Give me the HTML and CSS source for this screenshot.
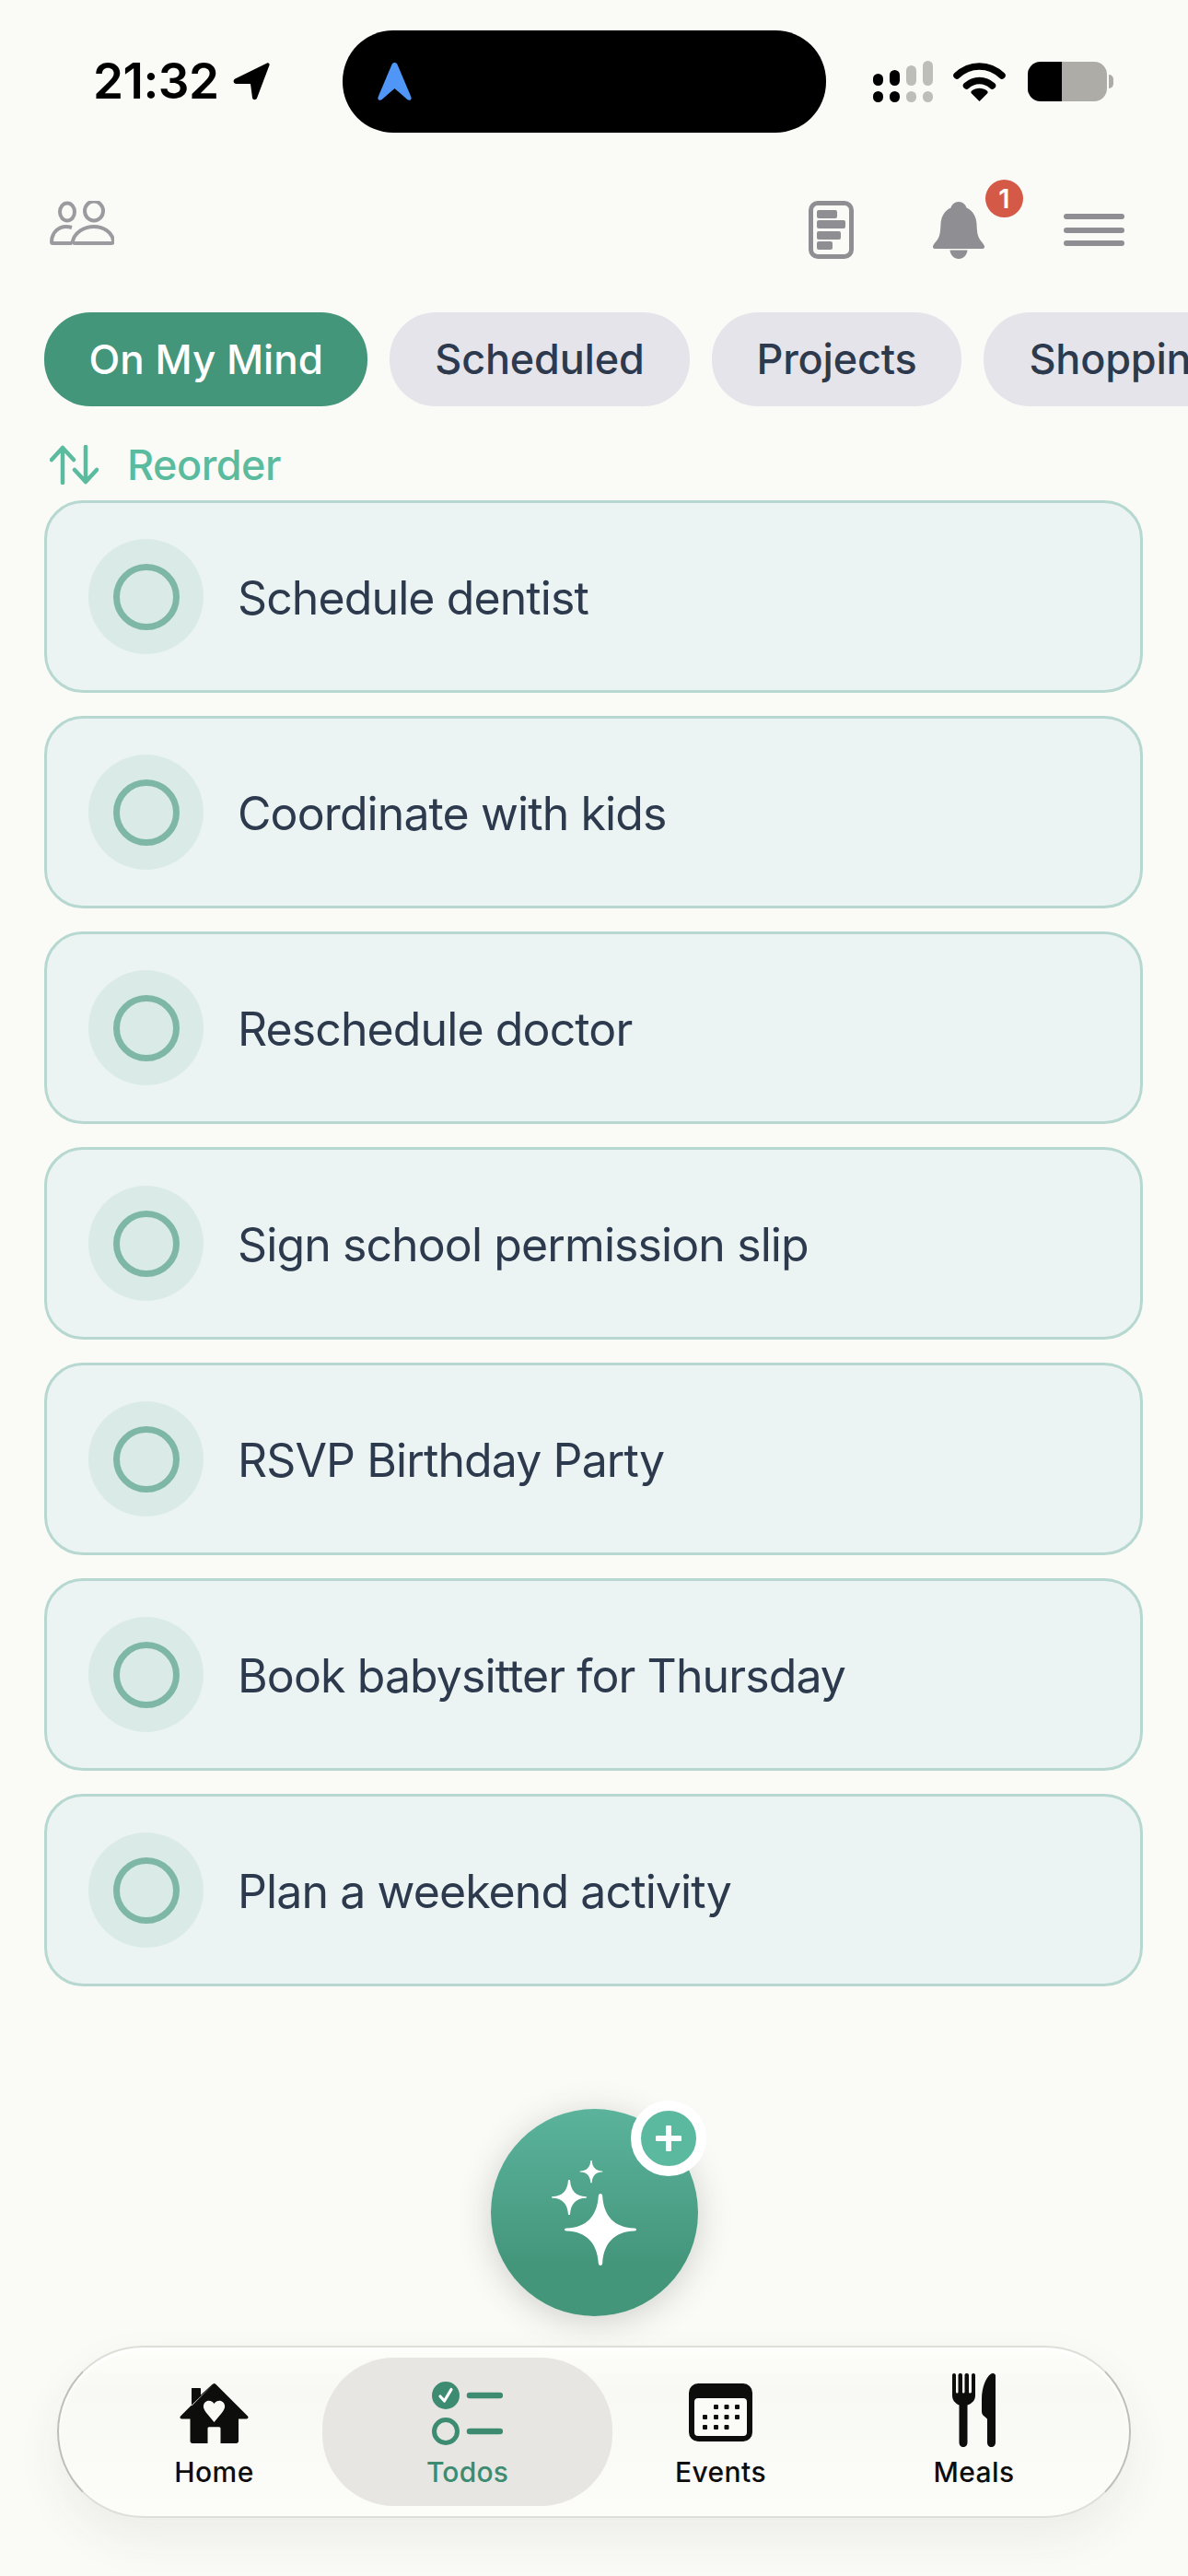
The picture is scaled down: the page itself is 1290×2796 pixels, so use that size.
FILE: index.html
```html
<!DOCTYPE html>
<html lang="en">
<head>
<meta charset="utf-8">
<title>Todos</title>
<link rel="stylesheet" href="styles.css">
</head>
<body>
<div class="page">
  <div class="status">
    <span class="time">21:32</span>
    <svg class="loc" viewBox="0 0 40 41"><path d="M37 .5c1.500-.6 3 .7 2.500 2.300L26 38.500c-.9 2.500-4.600 2.200-5-.5l-2-15H4c-3.500 0-4.600-3.700-1.700-5.500z" fill="#000"/></svg>
    <div class="island">
      <svg class="nav-arrow" viewBox="0 0 37 41"><path d="M15.500 2c1.300-2.700 4.700-2.700 6 0l14.800 35c1.300 3-1.600 5-4 3L18.500 28 4.700 40c-2.400 2-5.300 0-4-3z" fill="#4F96F7"/></svg>
    </div>
    <svg class="signal" viewBox="0 0 65 45">
      <rect x="0" y="14" width="11" height="13" rx="5.500" fill="#000"/>
      <rect x="18" y="10" width="11" height="17" rx="5.500" fill="#000"/>
      <rect x="36" y="5" width="11" height="22" rx="5.500" fill="#BDBEB9"/>
      <rect x="54" y="0" width="11" height="27" rx="5.500" fill="#BDBEB9"/>
      <rect x="0" y="33" width="11" height="12" rx="5.500" fill="#000"/>
      <rect x="18" y="33" width="11" height="12" rx="5.500" fill="#000"/>
      <rect x="36" y="33" width="11" height="12" rx="5.500" fill="#BDBEB9"/>
      <rect x="54" y="33" width="11" height="12" rx="5.500" fill="#BDBEB9"/>
    </svg>
    <svg class="wifi" viewBox="0 0 57 42">
      <path d="M4 14C18 .5 39 .5 53 14" fill="none" stroke="#000" stroke-width="7.500" stroke-linecap="round"/>
      <path d="M14.500 25c8-7.500 20-7.500 28 0" fill="none" stroke="#000" stroke-width="7.500" stroke-linecap="round"/>
      <path d="M28.500 42L20 33.500c-1-1-.8-2.200.2-3 5-3.600 11.600-3.600 16.600 0 1 .8 1.200 2 .2 3z" fill="#000"/>
    </svg>
    <div class="battery"><span class="battery-fill"></span></div>
    <span class="battery-nub"></span>
  </div>

  <header class="topbar">
    <svg class="people" viewBox="0 0 70 48" fill="none" stroke="#9B9B9F" stroke-width="4">
      <ellipse cx="19" cy="12" rx="8" ry="9.500"/>
      <ellipse cx="48" cy="11" rx="10" ry="10.500"/>
      <path d="M24 29c-2-.6-4-1-6-1C9 28 2 35 2 44.500c0 .8.500 1.500 1.500 1.500H24"/>
      <path d="M27 46c-1.300 0-2.300-1-2-2.500C27 34.500 37 28 48 28s20 6.500 21 15.500c.2 1.500-.8 2.500-2 2.500z"/>
    </svg>
    <div class="top-actions">
      <div class="doc">
        <span class="doc-line doc-line-a"></span>
        <span class="doc-line doc-line-b"></span>
        <span class="doc-line doc-line-c"></span>
        <span class="doc-line doc-line-d"></span>
      </div>
      <div class="bell-wrap">
        <svg class="bell" viewBox="0 0 56 62" fill="#8F8F93">
          <path d="M28 0c4.500 0 7.500 3 8.500 6.500C43.500 9.500 47 16 47.500 24c.5 9 .5 13.500 5 19 2.500 3 4 5 3.500 6.500-.5 1-1.500 1.500-3 1.500H3c-1.500 0-2.500-.5-3-1.500-.5-1.500 1-3.500 3.500-6.500 4.500-5.500 4.500-10 5-19C9 16 12.500 9.500 19.500 6.500 20.500 3 23.500 0 28 0z"/>
          <path d="M18.500 52.500h19C37 58 33 62 28 62s-9-4-9.500-9.500z"/>
        </svg>
        <span class="badge">1</span>
      </div>
      <div class="menu"><span></span><span></span><span></span></div>
    </div>
  </header>

  <nav class="tabs">
    <span class="tab tab-on">On My Mind</span>
    <span class="tab">Scheduled</span>
    <span class="tab">Projects</span>
    <span class="tab">Shopping</span>
  </nav>

  <div class="reorder">
    <svg class="reorder-icon" viewBox="0 0 53 43" fill="none" stroke="#5BBB9F" stroke-width="4.500" stroke-linecap="round" stroke-linejoin="round">
      <path d="M14 41V3M2 16L14 3l12 13"/>
      <path d="M39 2v38M27 27l12 13 12-13"/>
    </svg>
    <span>Reorder</span>
  </div>

  <ul class="list">
    <li class="card"><span class="check"><span class="ring"></span></span><span class="label">Schedule dentist</span></li>
    <li class="card"><span class="check"><span class="ring"></span></span><span class="label">Coordinate with kids</span></li>
    <li class="card"><span class="check"><span class="ring"></span></span><span class="label">Reschedule doctor</span></li>
    <li class="card"><span class="check"><span class="ring"></span></span><span class="label">Sign school permission slip</span></li>
    <li class="card"><span class="check"><span class="ring"></span></span><span class="label">RSVP Birthday Party</span></li>
    <li class="card"><span class="check"><span class="ring"></span></span><span class="label">Book babysitter for Thursday</span></li>
    <li class="card"><span class="check"><span class="ring"></span></span><span class="label">Plan a weekend activity</span></li>
  </ul>

  <div class="fab-row">
    <div class="fab">
      <svg class="stars" viewBox="0 0 92 114" fill="#fff">
        <defs>
          <path id="star" d="M0-39c1.400 0 2 1 2.200 2.500C3.500-15 15-2 37-1.500c1.400.1 2 .7 2 1.500s-.6 1.400-2 1.500C15 2 3.500 15 2.200 36.500c-.2 1.500-.8 2.500-2.200 2.500s-2-1-2.200-2.500C-3.500 15-15 2-37 1.500c-1.400-.1-2-.7-2-1.500s.6-1.400 2-1.500C-15-2-3.500-15-2.200-36.500c.2-1.500.8-2.500 2.200-2.500z"/>
        </defs>
        <use href="#star" transform="translate(53 75)"/>
        <use href="#star" transform="translate(19 40) scale(.49)"/>
        <use href="#star" transform="translate(43 12) scale(.32)"/>
      </svg>
      <span class="fab-plus">
        <svg viewBox="0 0 28 28" class="plus-icon"><path d="M14 2v24M2 14h24" stroke="#fff" stroke-width="6" stroke-linecap="round" fill="none"/></svg>
      </span>
    </div>
  </div>

  <nav class="bottom">
    <div class="bottom-item">
      <span class="bottom-icon">
        <svg class="i-home" viewBox="0 0 75 65">
          <path fill-rule="evenodd" fill="#0D0D0C" d="M37.500 0L13 24.500V5.500C13 5 13.500 5 14 5h8c.5 0 1 .5 1 1v6.500L35.500 1zM37.500 0c.6 0 1.200.3 1.700.8L74 35.500c1 1.300.5 3-1.500 3H64v24c0 1.300-1 2.500-2.500 2.500H44.500v-16c0-1-.6-1.800-1.500-1.800H32c-.9 0-1.500.8-1.500 1.800v16H14c-1.500 0-2.500-1.200-2.500-2.500v-24H2.500c-2 0-2.500-1.700-1.500-3l12-12zM37.500 22c-2-3-5-3.800-7.500-3-3 1-4.500 3.800-4 7 .5 2.500 2 4.500 4 7l7.500 9 7.500-9c2-2.500 3.500-4.500 4-7 .5-3.200-1-6-4-7-2.500-.8-5.500 0-7.500 3z"/>
        </svg>
      </span>
      <span class="bottom-text">Home</span>
    </div>
    <div class="bottom-item bottom-item-on">
      <span class="bottom-icon">
        <svg class="i-todos" viewBox="0 0 77 69">
          <circle cx="15" cy="15" r="15" fill="#3D8C72"/>
          <path d="M9 16l4.500 5L21 8.500" fill="none" stroke="#fff" stroke-width="3.200" stroke-linecap="round" stroke-linejoin="round"/>
          <circle cx="15" cy="54" r="12.500" fill="none" stroke="#3D8C72" stroke-width="5"/>
          <path d="M41 15h33M41 54h33" stroke="#3D8C72" stroke-width="6.500" stroke-linecap="round"/>
        </svg>
      </span>
      <span class="bottom-text">Todos</span>
    </div>
    <div class="bottom-item">
      <span class="bottom-icon">
        <svg class="i-events" viewBox="0 0 69 63">
          <rect width="69" height="63" rx="10" fill="#0D0D0C"/>
          <rect x="6" y="16" width="57" height="41" rx="4" fill="#FBFBF7"/>
          <g fill="#0D0D0C">
            <rect x="27" y="23" width="5" height="5" rx="1"/><rect x="38.500" y="23" width="5" height="5" rx="1"/><rect x="50" y="23" width="5" height="5" rx="1"/>
            <rect x="15" y="34" width="5" height="5" rx="1"/><rect x="27" y="34" width="5" height="5" rx="1"/><rect x="38.500" y="34" width="5" height="5" rx="1"/><rect x="50" y="34" width="5" height="5" rx="1"/>
            <rect x="15" y="45" width="5" height="5" rx="1"/><rect x="27" y="45" width="5" height="5" rx="1"/><rect x="38.500" y="45" width="5" height="5" rx="1"/>
          </g>
        </svg>
      </span>
      <span class="bottom-text">Events</span>
    </div>
    <div class="bottom-item">
      <span class="bottom-icon">
        <svg class="i-meals" viewBox="0 0 47 80" fill="#0D0D0C">
          <path d="M2 0c1 0 2 .7 2 2v18c0 1 .6 1.500 1.300 1.500S6.500 21 6.500 20V2c0-1.200 1-2 2-2h.5c1.200 0 2 .8 2 2v18c0 1 .5 1.500 1.200 1.500s1.300-.5 1.300-1.500V2c0-1.200.9-2 2-2h.5c1 0 2 .8 2 2v18c0 1 .5 1.500 1.200 1.500S21 21 21 20V2c0-1.200.9-2 2-2s2 .8 2 2v22c0 5-3 8.500-8.500 10.500V75c0 3-2 5-4.500 5s-4.500-2-4.500-5V34.500C3 32.500 0 29 0 24V2C0 .7 1 0 2 0z"/>
          <path d="M44 0c1.700 0 3 1 3 2.500V75c0 3-2 5-4.500 5S38 78 38 75V50.500c0-1-.3-1.500-1-2l-3-2.500c-1.500-1.200-2-3-2-5V28C32 15 37 4 41.500 1 42.300.3 43 0 44 0z"/>
        </svg>
      </span>
      <span class="bottom-text">Meals</span>
    </div>
  </nav>
</div>
</body>
</html>
```
FILE: styles.css
```css
* { box-sizing: border-box; margin: 0; padding: 0; }
html, body { height: 100%; }
body {
  background: #FAFBF7;
  font-family: Inter, "Liberation Sans", sans-serif;
  overflow: hidden;
}
.page { width: 1290px; height: 2796px; overflow: hidden; position: relative; }

.status { display: flex; align-items: center; height: 111px; margin-top: 33px; padding-left: 101px; }
.time { font-size: 53px; font-weight: 600; color: #000; width: 137px; line-height: 1; white-space: nowrap; letter-spacing: -.5px; }
.loc { width: 40px; height: 41px; margin-left: 15px; margin-right: 79px; }
.island { width: 525px; height: 111px; border-radius: 55px; background: #000; display: flex; align-items: center; padding-left: 38px; }
.nav-arrow { width: 37px; height: 41px; }
.signal { width: 65px; height: 45px; margin-left: 51px; }
.wifi { width: 57px; height: 42px; margin-left: 22px; }
.battery { width: 86px; height: 43px; margin-left: 24px; border-radius: 14px; background: #ADACA7; overflow: hidden; }
.battery-fill { display: block; width: 37px; height: 43px; background: #000; }
.battery-nub { width: 5px; height: 15px; margin-left: 2px; border-radius: 0 8px 8px 0; background: #ADACA7; }

.topbar { display: flex; justify-content: space-between; align-items: flex-end; height: 86px; margin-top: 51px; padding: 0 69px 0 54px; }
.people { width: 70px; height: 48px; margin-bottom: 15px; }
.top-actions { display: flex; align-items: flex-end; }
.doc { width: 49px; height: 63px; border: 5px solid #8F8F93; border-radius: 10px; display: flex; flex-direction: column; gap: 2.500px; padding: 5px 4px; }
.doc-line { display: block; height: 9px; border-radius: 2px; background: #8F8F93; }
.doc-line-a { width: 22px; }
.doc-line-b { width: 31px; }
.doc-line-c { width: 26px; }
.doc-line-d { width: 17px; }
.bell-wrap { position: relative; margin-left: 86px; height: 62px; }
.bell { display: block; width: 56px; height: 62px; }
.badge { position: absolute; left: 57px; top: -24px; width: 41px; height: 41px; border-radius: 50%; background: #D45A47; color: #fff; font-size: 29px; font-weight: 600; line-height: 41px; text-align: center; }
.menu { width: 66px; margin-left: 86px; margin-bottom: 14px; display: flex; flex-direction: column; gap: 8.500px; }
.menu span { display: block; height: 6px; border-radius: 3px; background: #8F8F93; }

.tabs { display: flex; gap: 24px; margin-top: 58px; padding-left: 48px; white-space: nowrap; }
.tab { flex: none; height: 102px; padding: 0 49px; border-radius: 50px; background: #E5E4EA; color: #2D3A4E; font-size: 45px; font-weight: 500; letter-spacing: -.2px; line-height: 102px; }
.tab-on { padding: 0 48.500px; background: #44967B; color: #fff; font-size: 44px; letter-spacing: 0; }

.reorder { display: flex; align-items: center; height: 43px; margin-top: 42px; padding-left: 54px; gap: 31px; color: #5BBB9F; font-size: 45px; font-weight: 500; letter-spacing: -.5px; line-height: 43px; }
.reorder-icon { width: 53px; height: 43px; }

.list { list-style: none; display: flex; flex-direction: column; gap: 25px; margin: 17px 49px 0 48px; }
.card { display: flex; align-items: center; height: 209px; padding-left: 45px; border: 3px solid #B7D8D0; border-radius: 42px; background: #EBF4F2; }
.check { width: 125px; height: 125px; border-radius: 50%; background: #DAEBE7; display: flex; align-items: center; justify-content: center; }
.ring { width: 72px; height: 72px; border-radius: 50%; border: 7px solid #7FB7A6; }
.label { margin-left: 37px; padding-top: 3px; font-size: 50px; letter-spacing: -.9px; color: #2D3A4E; line-height: 1.2; }

.fab-row { display: flex; justify-content: center; margin-top: 133px; }
.fab { position: relative; width: 225px; height: 225px; border-radius: 50%; background: linear-gradient(180deg, #5BB39C 0%, #44967B 75%); box-shadow: 0 6px 36px rgba(60, 60, 50, .22); display: flex; align-items: center; justify-content: center; }
.stars { width: 92px; height: 114px; }
.fab-plus { position: absolute; left: 152px; top: -9px; width: 82px; height: 82px; border: 11px solid #fff; border-radius: 50%; background: #5BB99F; display: flex; align-items: center; justify-content: center; }
.plus-icon { width: 28px; height: 28px; }

.bottom { position: absolute; left: 62px; top: 2546px; width: 1166px; height: 187px; border-radius: 94px; border: 2px solid #DEDED9; border-left-color: #BEBEBA; border-right-color: #BEBEBA; background: linear-gradient(180deg, #FDFDFA 0%, #F8F8F4 25%, #FCFCF8 100%); box-shadow: 0 22px 50px rgba(60, 60, 50, .07), inset 0 3px 4px #fff; display: grid; grid-template-columns: repeat(4, 275px); padding: 11px 31px; }
.bottom-item { display: flex; flex-direction: column; align-items: center; color: #0D0D0C; border-radius: 78px; }
.bottom-item-on { margin: 0 -20px; background: #E7E6E2; color: #3D8C72; }
.bottom-icon { height: 105.500px; display: flex; align-items: flex-end; justify-content: center; padding-bottom: 12.500px; }
.bottom-text { font-size: 30px; font-weight: 450; letter-spacing: .4px; line-height: 36px; }
.bottom-item-on .bottom-text { font-weight: 550; letter-spacing: .2px; }
.i-home { width: 75px; height: 65px; }
.i-todos { width: 77px; height: 69px; margin-bottom: -2px; }
.i-events { width: 69px; height: 63px; margin-bottom: 2px; }
.i-meals { width: 47px; height: 80px; margin-bottom: -4px; }
```
